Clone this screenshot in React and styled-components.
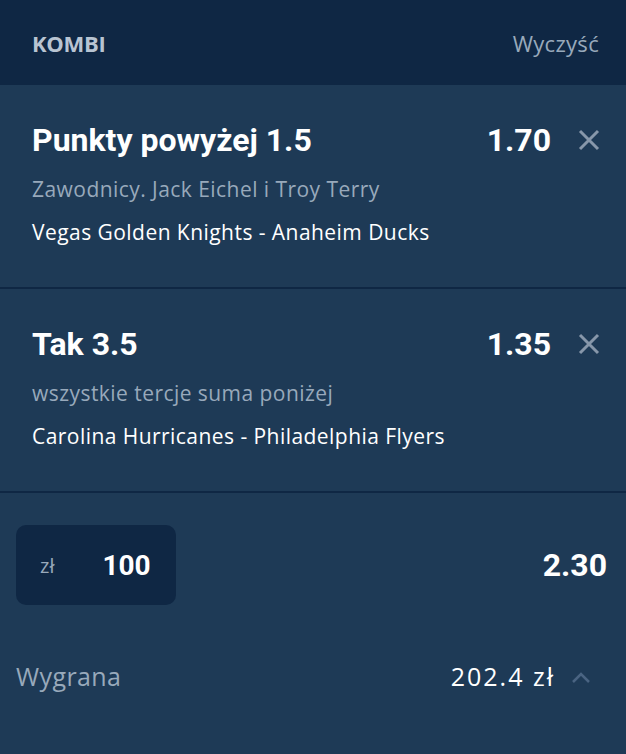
import React from "react"
import styled, { createGlobalStyle } from "styled-components"

const bodyBg = "#1e3a56"
const darkBg = "#0f2744"
const muted = "#98a9bb"

const GlobalStyle = createGlobalStyle`
  html, body {
    margin: 0;
    padding: 0;
    background: ${bodyBg};
  }
  * {
    box-sizing: border-box;
  }
`

const Slip = styled.div`
  width: 626px;
  min-height: 754px;
  background: ${bodyBg};
  font-family: "Open Sans", "Noto Sans", sans-serif;
  color: #fff;
`

const Header = styled.header`
  height: 85px;
  background: ${darkBg};
  display: flex;
  align-items: center;
  justify-content: space-between;
  padding: 0 27px 0 32px;
`

const HeaderTitle = styled.span`
  font-family: "Open Sans", sans-serif;
  font-weight: 700;
  font-size: 22px;
  letter-spacing: -0.3px;
  color: #b8c4d2;
`

const ClearButton = styled.button`
  background: none;
  border: 0;
  padding: 0;
  font-family: "Open Sans", sans-serif;
  font-size: 22px;
  letter-spacing: 0.3px;
  color: ${muted};
  cursor: pointer;
`

const Bet = styled.section`
  padding: 37px 26px 41px 32px;
  border-bottom: 2px solid ${darkBg};
`

const BetTop = styled.div`
  display: flex;
  align-items: center;
  height: 36px;
`

const BetTitle = styled.h2`
  flex: 1;
  margin: 0;
  font-family: Roboto, sans-serif;
  font-weight: 700;
  font-size: 32px;
  line-height: 36px;
`

const Odds = styled.span`
  font-family: Roboto, sans-serif;
  font-weight: 700;
  font-size: 32px;
  line-height: 36px;
`

const RemoveButton = styled.button`
  background: none;
  border: 0;
  padding: 0;
  margin-left: 27px;
  width: 22px;
  height: 22px;
  display: flex;
  align-items: center;
  justify-content: center;
  cursor: pointer;
`

const Line = styled.div`
  margin-top: ${p => p.$gap}px;
  font-size: 21px;
  letter-spacing: 0.45px;
  line-height: 28px;
  color: ${p => (p.$muted ? muted : "#fff")};
`

const StakeRow = styled.div`
  display: flex;
  align-items: center;
  justify-content: space-between;
  padding: 32px 19px 0 16px;
`

const StakeBox = styled.div`
  width: 160px;
  height: 80px;
  border-radius: 10px;
  background: ${darkBg};
  display: flex;
  align-items: center;
  gap: 48px;
  padding-left: 24px;
`

const Currency = styled.span`
  font-family: "Open Sans", sans-serif;
  font-size: 20px;
  color: ${muted};
`

const StakeValue = styled.span`
  font-family: Roboto, sans-serif;
  font-weight: 700;
  font-size: 28px;
`

const TotalOdds = styled.span`
  font-family: Roboto, sans-serif;
  font-weight: 700;
  font-size: 32px;
`

const WinRow = styled.div`
  display: flex;
  align-items: center;
  padding: 55px 35px 0 16px;
  font-size: 25px;
  line-height: 33px;
`

const WinLabel = styled.span`
  flex: 1;
  letter-spacing: 0.4px;
  color: ${muted};
`

const WinValue = styled.span`
  letter-spacing: 2px;
  color: #fff;
`

const Chevron = styled.span`
  margin-left: 16px;
  display: flex;
`

const CloseIcon = () => (
  <svg width="22" height="22" viewBox="0 0 22 22">
    <path d="M2 2 L20 20 M20 2 L2 20" stroke="#8797aa" strokeWidth="3" />
  </svg>
)

const bets = [
  {
    title: "Punkty powyżej 1.5",
    odds: "1.70",
    market: "Zawodnicy. Jack Eichel i Troy Terry",
    match: "Vegas Golden Knights - Anaheim Ducks",
  },
  {
    title: "Tak 3.5",
    odds: "1.35",
    market: "wszystkie tercje suma poniżej",
    match: "Carolina Hurricanes - Philadelphia Flyers",
  },
]

export default function App() {
  return (
    <Slip>
      <GlobalStyle />
      <Header>
        <HeaderTitle>KOMBI</HeaderTitle>
        <ClearButton>Wyczyść</ClearButton>
      </Header>
      {bets.map(bet => (
        <Bet key={bet.title}>
          <BetTop>
            <BetTitle>{bet.title}</BetTitle>
            <Odds>{bet.odds}</Odds>
            <RemoveButton aria-label="Usuń">
              <CloseIcon />
            </RemoveButton>
          </BetTop>
          <Line $muted $gap={17}>{bet.market}</Line>
          <Line $gap={15}>{bet.match}</Line>
        </Bet>
      ))}
      <StakeRow>
        <StakeBox>
          <Currency>zł</Currency>
          <StakeValue>100</StakeValue>
        </StakeBox>
        <TotalOdds>2.30</TotalOdds>
      </StakeRow>
      <WinRow>
        <WinLabel>Wygrana</WinLabel>
        <WinValue>202.4 zł</WinValue>
        <Chevron>
          <svg width="20" height="12" viewBox="0 0 20 12">
            <path d="M2 11 L10 3 L18 11" fill="none" stroke="#4a6482" strokeWidth="2.5" />
          </svg>
        </Chevron>
      </WinRow>
    </Slip>
  )
}
